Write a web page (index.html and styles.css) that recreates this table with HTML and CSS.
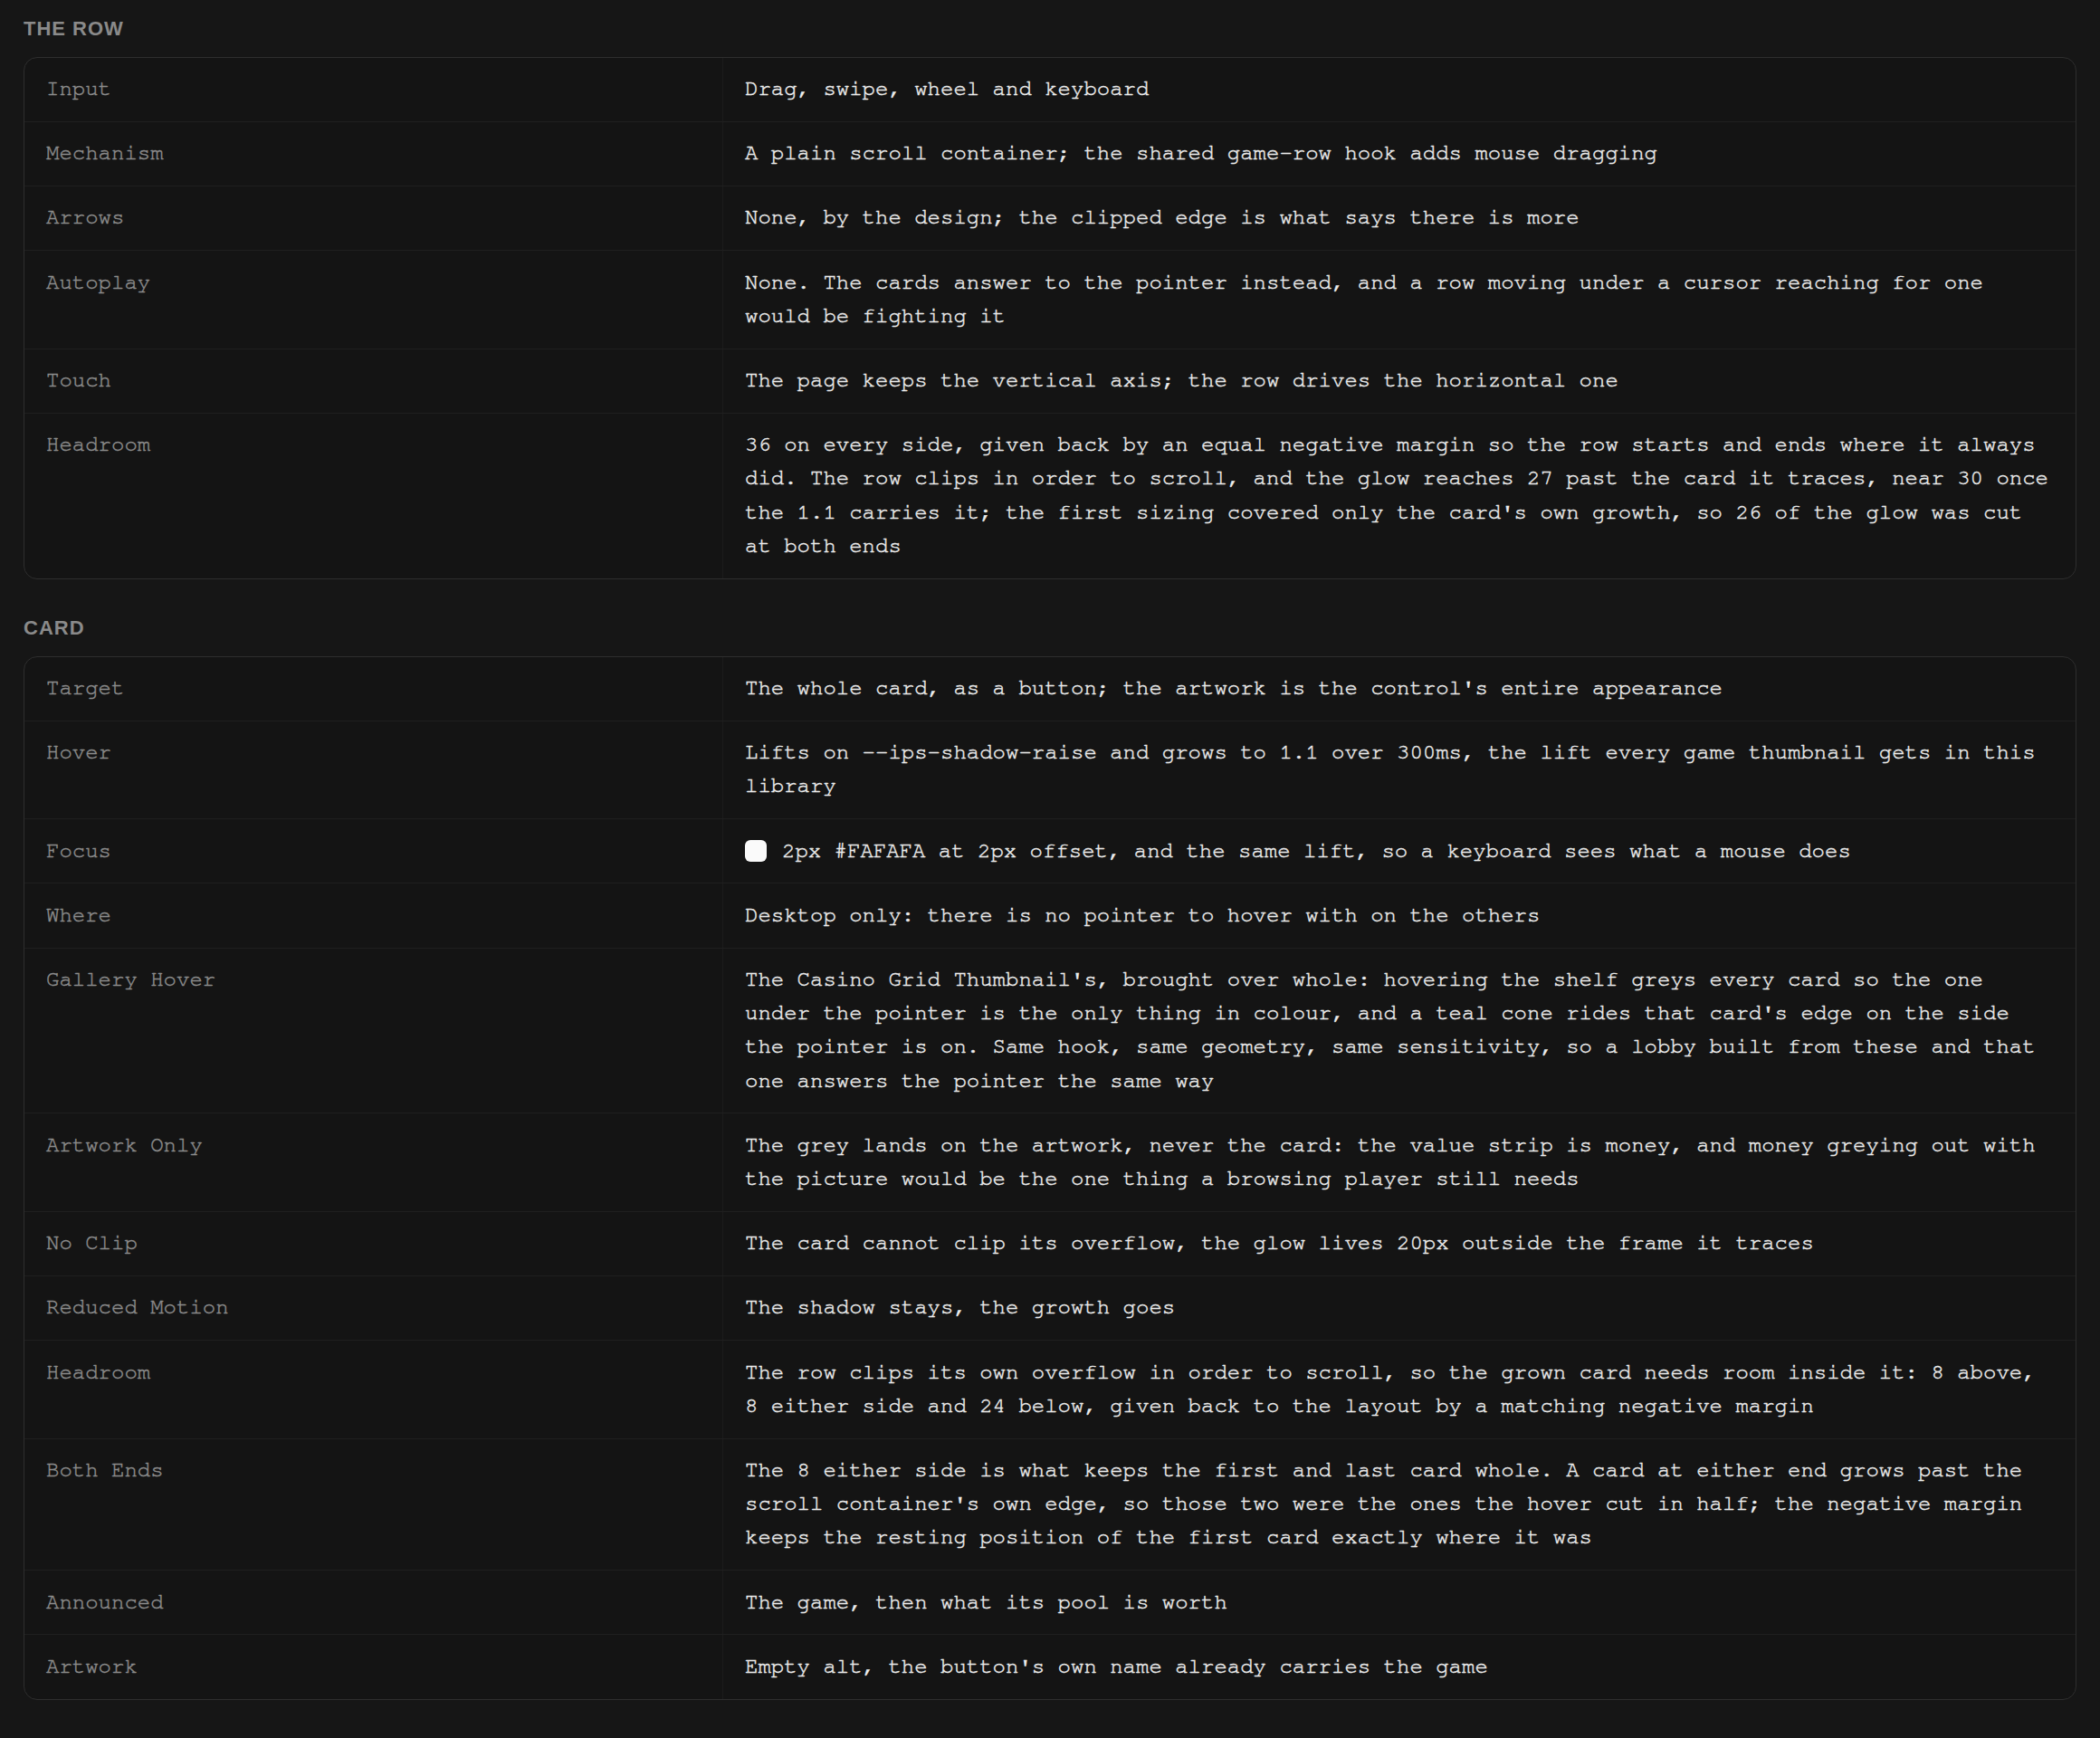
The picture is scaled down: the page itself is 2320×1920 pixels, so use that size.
FILE: index.html
```html
<!DOCTYPE html>
<html lang="en">
<head>
<meta charset="utf-8">
<title>Game row spec</title>
<link rel="stylesheet" href="styles.css">
</head>
<body>
<main class="page">
  <section class="group">
    <h2 class="group-title">The Row</h2>
    <div class="spec">
      <div class="spec-row"><div class="spec-key">Input</div><div class="spec-val">Drag, swipe, wheel and keyboard</div></div>
      <div class="spec-row"><div class="spec-key">Mechanism</div><div class="spec-val">A plain scroll container; the shared game-row hook adds mouse dragging</div></div>
      <div class="spec-row"><div class="spec-key">Arrows</div><div class="spec-val">None, by the design; the clipped edge is what says there is more</div></div>
      <div class="spec-row"><div class="spec-key">Autoplay</div><div class="spec-val">None. The cards answer to the pointer instead, and a row moving under a cursor reaching for one would be fighting it</div></div>
      <div class="spec-row"><div class="spec-key">Touch</div><div class="spec-val">The page keeps the vertical axis; the row drives the horizontal one</div></div>
      <div class="spec-row"><div class="spec-key">Headroom</div><div class="spec-val">36 on every side, given back by an equal negative margin so the row starts and ends where it always did. The row clips in order to scroll, and the glow reaches 27 past the card it traces, near 30 once the 1.1 carries it; the first sizing covered only the card's own growth, so 26 of the glow was cut at both ends</div></div>
    </div>
  </section>
  <section class="group">
    <h2 class="group-title">Card</h2>
    <div class="spec">
      <div class="spec-row"><div class="spec-key">Target</div><div class="spec-val">The whole card, as a button; the artwork is the control's entire appearance</div></div>
      <div class="spec-row"><div class="spec-key">Hover</div><div class="spec-val">Lifts on --ips-shadow-raise and grows to 1.1 over 300ms, the lift every game thumbnail gets in this library</div></div>
      <div class="spec-row"><div class="spec-key">Focus</div><div class="spec-val spec-val-swatch"><span class="swatch"></span><span>2px #FAFAFA at 2px offset, and the same lift, so a keyboard sees what a mouse does</span></div></div>
      <div class="spec-row"><div class="spec-key">Where</div><div class="spec-val">Desktop only: there is no pointer to hover with on the others</div></div>
      <div class="spec-row"><div class="spec-key">Gallery Hover</div><div class="spec-val">The Casino Grid Thumbnail's, brought over whole: hovering the shelf greys every card so the one under the pointer is the only thing in colour, and a teal cone rides that card's edge on the side the pointer is on. Same hook, same geometry, same sensitivity, so a lobby built from these and that one answers the pointer the same way</div></div>
      <div class="spec-row"><div class="spec-key">Artwork Only</div><div class="spec-val">The grey lands on the artwork, never the card: the value strip is money, and money greying out with the picture would be the one thing a browsing player still needs</div></div>
      <div class="spec-row"><div class="spec-key">No Clip</div><div class="spec-val">The card cannot clip its overflow, the glow lives 20px outside the frame it traces</div></div>
      <div class="spec-row"><div class="spec-key">Reduced Motion</div><div class="spec-val">The shadow stays, the growth goes</div></div>
      <div class="spec-row"><div class="spec-key">Headroom</div><div class="spec-val">The row clips its own overflow in order to scroll, so the grown card needs room inside it: 8 above, 8 either side and 24 below, given back to the layout by a matching negative margin</div></div>
      <div class="spec-row"><div class="spec-key">Both Ends</div><div class="spec-val">The 8 either side is what keeps the first and last card whole. A card at either end grows past the scroll container's own edge, so those two were the ones the hover cut in half; the negative margin keeps the resting position of the first card exactly where it was</div></div>
      <div class="spec-row"><div class="spec-key">Announced</div><div class="spec-val">The game, then what its pool is worth</div></div>
      <div class="spec-row"><div class="spec-key">Artwork</div><div class="spec-val">Empty alt, the button's own name already carries the game</div></div>
    </div>
  </section>
</main>
</body>
</html>
```

FILE: styles.css
```css
html, body {
  margin: 0;
  padding: 0;
  background: #161616;
}

.page {
  padding: 16px 26px 40px;
  display: flex;
  flex-direction: column;
  gap: 38.5px;
}

.group-title {
  margin: 0 0 14.5px;
  font-family: "Liberation Sans", Arial, sans-serif;
  font-weight: 700;
  font-size: 22px;
  line-height: 32px;
  letter-spacing: 1px;
  text-transform: uppercase;
  color: #8a8a8a;
}

.spec {
  border: 1px solid #2e2e2e;
  border-radius: 15px;
  background: #141414;
  overflow: hidden;
}

.spec-row {
  display: grid;
  grid-template-columns: 772px 1fr;
  border-top: 1px solid #1f1f1f;
}

.spec-row:first-child {
  border-top: none;
}

.spec-key,
.spec-val {
  padding: 16.5px 24px;
  font-family: "Nimbus Mono PS", "Nimbus Mono L", "FreeMono", "Courier", "Liberation Mono", monospace;
  font-size: 24px;
  line-height: 37.2px;
  -webkit-text-stroke: 0.45px currentColor;
}

.spec-key {
  color: #8c8c8c;
  border-right: 1px solid #1c1c1c;
}

.spec-val {
  color: #ececec;
}

.spec-val-swatch {
  display: flex;
  align-items: center;
  gap: 17px;
}

.swatch {
  flex: none;
  width: 24px;
  height: 24px;
  border-radius: 6px;
  background: #fafafa;
}
```
